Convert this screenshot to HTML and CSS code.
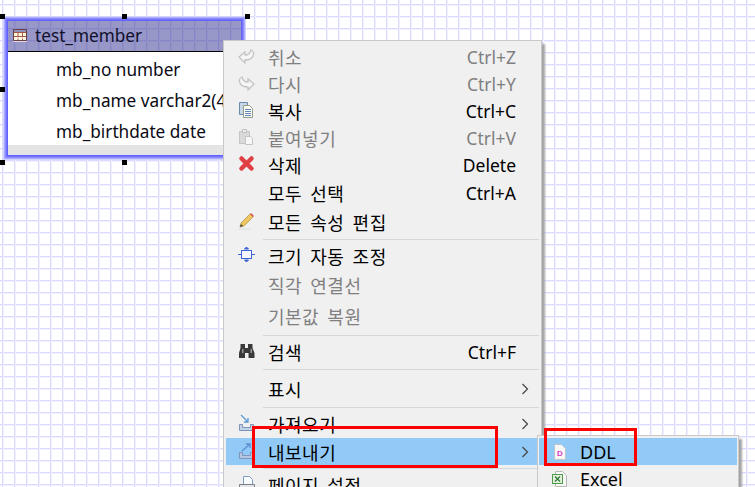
FILE: index.html
```html
<!DOCTYPE html>
<html lang="ko">

<head>
    <meta charset="UTF-8">
    <meta name="viewport" content="width=device-width, initial-scale=1.0">
    <title>ERD</title>
    <link rel="stylesheet" href="styles.css">
</head>

<body>
    <div class="canvas">
        <!-- table node -->
        <div class="node">
            <div class="node-head">
                <svg class="table-ico" width="14" height="14" viewBox="0 0 14 14">
                    <rect x="0.500" y="0.500" width="13" height="11" fill="#fff8d8" stroke="#6e3f44" />
                    <rect x="1" y="1" width="12" height="2" fill="#8d93b8" />
                    <path d="M1 3.500h12M1 7.500h12" stroke="#a5584a" />
                    <path d="M5 4v7M9.500 4v7" stroke="#a5584a" fill="none" />
                    <path d="M1 9h12" stroke="#ffffff" />
                    <path d="M0 12.500h14" stroke="#d8d8e8" />
                </svg>
                <span>test_member</span>
            </div>
            <div class="node-body">
                <div class="col">mb_no number</div>
                <div class="col">mb_name varchar2(40)</div>
                <div class="col">mb_birthdate date</div>
            </div>
            <div class="node-foot"></div>
        </div>
        <i class="handle h1"></i>
        <i class="handle h2"></i>
        <i class="handle h3"></i>
        <i class="handle h4"></i>
        <i class="handle h5"></i>
        <i class="handle h6"></i>

        <!-- context menu -->
        <div class="menu">
            <div class="row off">
                <svg class="ico" width="18" height="18" viewBox="0 0 18 18">
                    <path d="M1 10l6-5v3c3 0 5-1 6-5 3 1 3 4 2 6-1 3-4 4-8 4v3z" fill="#f6f6f6" stroke="#c4c4c4" stroke-width="1.300" />
                </svg>
                <span class="label">취소</span><span class="key">Ctrl+Z</span>
            </div>
            <div class="row off">
                <svg class="ico" width="18" height="18" viewBox="0 0 18 18">
                    <path d="M16 10l-6-5v3C7 8 5 7 4 3 1 4 1 7 2 9c1 3 4 4 8 4v3z" fill="#f6f6f6" stroke="#c4c4c4" stroke-width="1.300" />
                </svg>
                <span class="label">다시</span><span class="key">Ctrl+Y</span>
            </div>
            <div class="row">
                <svg class="ico" width="18" height="18" viewBox="0 0 18 18">
                    <path d="M1.500 1.500h8v12h-8z" fill="#c7d6e6" stroke="#6d8bad" />
                    <path d="M5.500 4.500h6l3 3v9h-9z" fill="#fdfdf6" stroke="#8f9c8e" />
                    <path d="M7 8.500h6M7 10.500h6M7 12.500h6M7 14.500h6" stroke="#5f86b5" />
                </svg>
                <span class="label">복사</span><span class="key">Ctrl+C</span>
            </div>
            <div class="row off">
                <svg class="ico" width="18" height="18" viewBox="0 0 18 18">
                    <path d="M1.500 3.500h10v12h-10z" fill="#d9d9d9" stroke="#c4c4c4" />
                    <path d="M4.500 1.500h4v3h-4z" fill="#ececec" stroke="#c0c0c0" />
                    <path d="M7.500 8.500h5l2 2v6h-7z" fill="#f7f7f7" stroke="#c4c4c4" />
                </svg>
                <span class="label">붙여넣기</span><span class="key">Ctrl+V</span>
            </div>
            <div class="row">
                <svg class="ico" width="18" height="18" viewBox="0 0 18 18">
                    <path d="M3.500 3.500l10 10M13.500 3.500l-10 10" stroke="#df3f45" stroke-width="4.500" stroke-linecap="round" />
                </svg>
                <span class="label">삭제</span><span class="key">Delete</span>
            </div>
            <div class="row row-29">
                <span class="label">모두 선택</span><span class="key">Ctrl+A</span>
            </div>
            <div class="row row-30">
                <svg class="ico" width="18" height="18" viewBox="0 0 18 18">
                    <path d="M2 15l1-4L12 2l3 3-9 9z" fill="#efc75e" stroke="#a98c45" stroke-width="0.700" />
                    <path d="M12 2l3 3 1-1-3-3z" fill="#d8504a" />
                    <path d="M2 15l1-3 2 2z" fill="#444" />
                    <path d="M1 17h12" stroke="#dcdcdc" />
                </svg>
                <span class="label">모든 속성 편집</span>
            </div>
            <div class="sep sep-2"></div>
            <div class="row row-30">
                <svg class="ico" width="18" height="18" viewBox="0 0 18 18">
                    <rect x="3.500" y="4.500" width="10" height="8" fill="#f7f9ff" stroke="#3f63d8" />
                    <path d="M0 8.500h3M14 8.500h3M6.500 3h4L8.500 1zM6.500 14h4l-2 2z" stroke="#3f63d8" fill="#3f63d8" stroke-width="1" />
                </svg>
                <span class="label">크기 자동 조정</span>
            </div>
            <div class="row row-28 off"><span class="label">직각 연결선</span></div>
            <div class="row row-33 off"><span class="label">기본값 복원</span></div>
            <div class="sep sep-3"></div>
            <div class="row row-29">
                <svg class="ico" width="18" height="18" viewBox="0 0 18 18">
                    <path d="M2.500 2h4.500v4h3V2h4.500v4l2 5v5h-6v-5H7v5H1v-5l1.500-5z" fill="#3a3a3a" />
                    <path d="M4 7h1.500v4H4zM12.500 7H14v4h-1.500z" fill="#9a9a9a" />
                </svg>
                <span class="label">검색</span><span class="key">Ctrl+F</span>
            </div>
            <div class="sep sep-3"></div>
            <div class="row row-35">
                <span class="label">표시</span>
                <svg class="arrow" width="8" height="12" viewBox="0 0 8 12"><path d="M1.500 1l5 5-5 5" fill="none" stroke="#444" stroke-width="1.200" /></svg>
            </div>
            <div class="sep"></div>
            <div class="row row-29">
                <svg class="ico" width="18" height="18" viewBox="0 0 18 18">
                    <path d="M1.500 10.500h3v3h8v-3h3v6h-14z" fill="#c2d2e8" stroke="#7f95b8" />
                    <path d="M3 1l7 7M10 4v4H6" stroke="#5b9bd8" stroke-width="1.300" fill="none" />
                </svg>
                <span class="label">가져오기</span>
                <svg class="arrow" width="8" height="12" viewBox="0 0 8 12"><path d="M1.500 1l5 5-5 5" fill="none" stroke="#444" stroke-width="1.200" /></svg>
            </div>
            <div class="row active">
                <svg class="ico" width="18" height="18" viewBox="0 0 18 18">
                    <path d="M1.500 10.500h3v3h8v-3h3v6h-14z" fill="#b4c6e4" stroke="#7f95b8" />
                    <path d="M4 9l8-7M8 2h4v4" stroke="#5b8fd0" stroke-width="1.300" fill="none" />
                </svg>
                <span class="label">내보내기</span>
                <svg class="arrow" width="8" height="12" viewBox="0 0 8 12"><path d="M1.500 1l5 5-5 5" fill="none" stroke="#444" stroke-width="1.200" /></svg>
            </div>
            <div class="sep sep-3"></div>
            <div class="row row-29">
                <svg class="ico" width="18" height="18" viewBox="0 0 18 18">
                    <path d="M5.500 1.500h6l3 3v5h-9z" fill="#f8fbff" stroke="#7e9cc6" />
                    <path d="M1.500 9.500h15v6h-15z" fill="#e6e6ea" stroke="#7d7d88" />
                </svg>
                <span class="label">페이지 설정</span>
            </div>
        </div>

        <!-- submenu -->
        <div class="submenu">
            <div class="sub-row active">
                <svg class="sub-ico" width="16" height="18" viewBox="0 0 16 18">
                    <path d="M2.500 1.500h7l4 4v11h-11z" fill="#f8f8f8" stroke="#bcc4cc" />
                    <text x="5" y="13" class="ddl-d">D</text>
                </svg>
                <span>DDL</span>
            </div>
            <div class="sub-row">
                <svg class="sub-ico" width="16" height="18" viewBox="0 0 16 18">
                    <path d="M3.500 1.500h7l4 4v11h-11z" fill="#f8f8f8" stroke="#b4bcb4" />
                    <rect x="0.500" y="4.500" width="10" height="9" fill="#e4f0dc" stroke="#4f9a4a" />
                    <path d="M3 6.500l5 5M8 6.500l-5 5" stroke="#2f7f3a" stroke-width="1.300" />
                </svg>
                <span>Excel</span>
            </div>
        </div>

        <!-- red marks -->
        <div class="mark mark-a"></div>
        <div class="mark mark-b"></div>
    </div>
</body>

</html>
```

FILE: styles.css
```css
html,
body {
    margin: 0;
    padding: 0;
}

.canvas {
    position: relative;
    width: 755px;
    height: 487px;
    overflow: hidden;
    background-color: #fff;
    background-image:
        linear-gradient(90deg, #dcdcff 0, #dcdcff 1px, #f0f0ff 1px, #f0f0ff 2px, transparent 2px),
        linear-gradient(180deg, #dcdcff 0, #dcdcff 1px, #f0f0ff 1px, #f0f0ff 2px, transparent 2px);
    background-size: 12px 12px;
    background-position: 2px 4px;
    font-family: "Noto Sans", "Noto Sans CJK KR", sans-serif;
    color: #000;
}

/* node */
.node {
    position: absolute;
    left: 8px;
    top: 21px;
    width: 233px;
    height: 134px;
    display: flex;
    flex-direction: column;
    box-shadow: 0 0 0 1px #6262ff, 0 0 0 2px #7474ff, 0 0 0 3px #8c8cff, 0 0 0 4px #adadff, 0 0 0 5px #d2d2ff;
}

.node-head {
    height: 30px;
    flex: none;
    display: flex;
    align-items: center;
    gap: 8px;
    padding-left: 5px;
    background-color: rgba(58, 58, 150, 0.52);
    border-bottom: 1px solid #000;
    font-size: 17.200px;
    color: #10102a;
}

.node-head span {
    margin-top: -2px;
}

.table-ico {
    flex: none;
}

.node-body {
    flex: 1;
    min-height: 0;
    overflow: hidden;
    padding-top: 2px;
    background-color: #fff;
}

.col {
    height: 31px;
    line-height: 31px;
    padding-left: 48px;
    font-size: 17.200px;
    white-space: nowrap;
    color: #0a0a14;
}

.node-foot {
    height: 10px;
    flex: none;
    background-color: #e4e4e4;
}

.handle {
    position: absolute;
    width: 5px;
    height: 5px;
    background-color: #000;
}

.h1 { left: 0; top: 14px; }
.h2 { left: 122px; top: 14px; }
.h3 { left: 245px; top: 14px; }
.h4 { left: 0; top: 87px; }
.h5 { left: 0; top: 160px; }
.h6 { left: 122px; top: 160px; }

/* menu */
.menu {
    position: absolute;
    left: 223px;
    top: 40px;
    width: 315px;
    height: 460px;
    padding: 2px 0 0 2px;
    background-color: #f0f0f0;
    border: 1px solid #c9c9c9;
    box-shadow: 4px 3px 2px -1px #a4a4a4;
}

.row {
    position: relative;
    height: 27px;
    display: flex;
    align-items: center;
    padding-left: 42px;
    padding-right: 21px;
    margin-right: 4px;
    font-size: 18px;
    white-space: nowrap;
}

.row-28 { height: 28px; }
.row-29 { height: 29px; }
.row-30 { height: 30px; }
.row-33 { height: 33px; }
.row-35 { height: 35px; }

.row.off {
    color: #808080;
}

.row.active {
    background-color: #91c9f7;
}

.ico {
    position: absolute;
    left: 12px;
    top: 50%;
    margin-top: -10px;
}

.label {
    flex: 1;
    word-spacing: 3px;
    letter-spacing: 0.5px;
}

.key {
    font-size: 17.500px;
}

.arrow {
    margin-right: -13px;
}

.sep {
    height: 1px;
    margin: 1px 2px 1px 37px;
    background-color: #d6d6d6;
}

.sep-2 { margin-top: 2px; }
.sep-3 { margin-top: 3px; }

/* submenu */
.submenu {
    position: absolute;
    left: 537px;
    top: 435px;
    width: 198px;
    height: 60px;
    padding: 2px 1px 0 1px;
    background-color: #f0f0f0;
    border: 1px solid #c9c9c9;
    box-shadow: 4px 3px 2px -1px #a4a4a4;
}

.sub-row {
    height: 27px;
    display: flex;
    align-items: center;
    gap: 12px;
    padding-left: 13px;
    font-size: 18px;
}

.sub-row.active {
    background-color: #91c9f7;
}

.sub-ico {
    flex: none;
}

.ddl-d {
    font-family: "Liberation Sans", sans-serif;
    font-size: 8px;
    font-weight: bold;
    fill: #d63fc4;
}

/* red marks */
.mark {
    position: absolute;
    border: 3px solid #f00;
    box-sizing: border-box;
}

.mark-a {
    left: 252px;
    top: 426px;
    width: 246px;
    height: 42px;
}

.mark-b {
    left: 544px;
    top: 428px;
    width: 93px;
    height: 38px;
}
```
